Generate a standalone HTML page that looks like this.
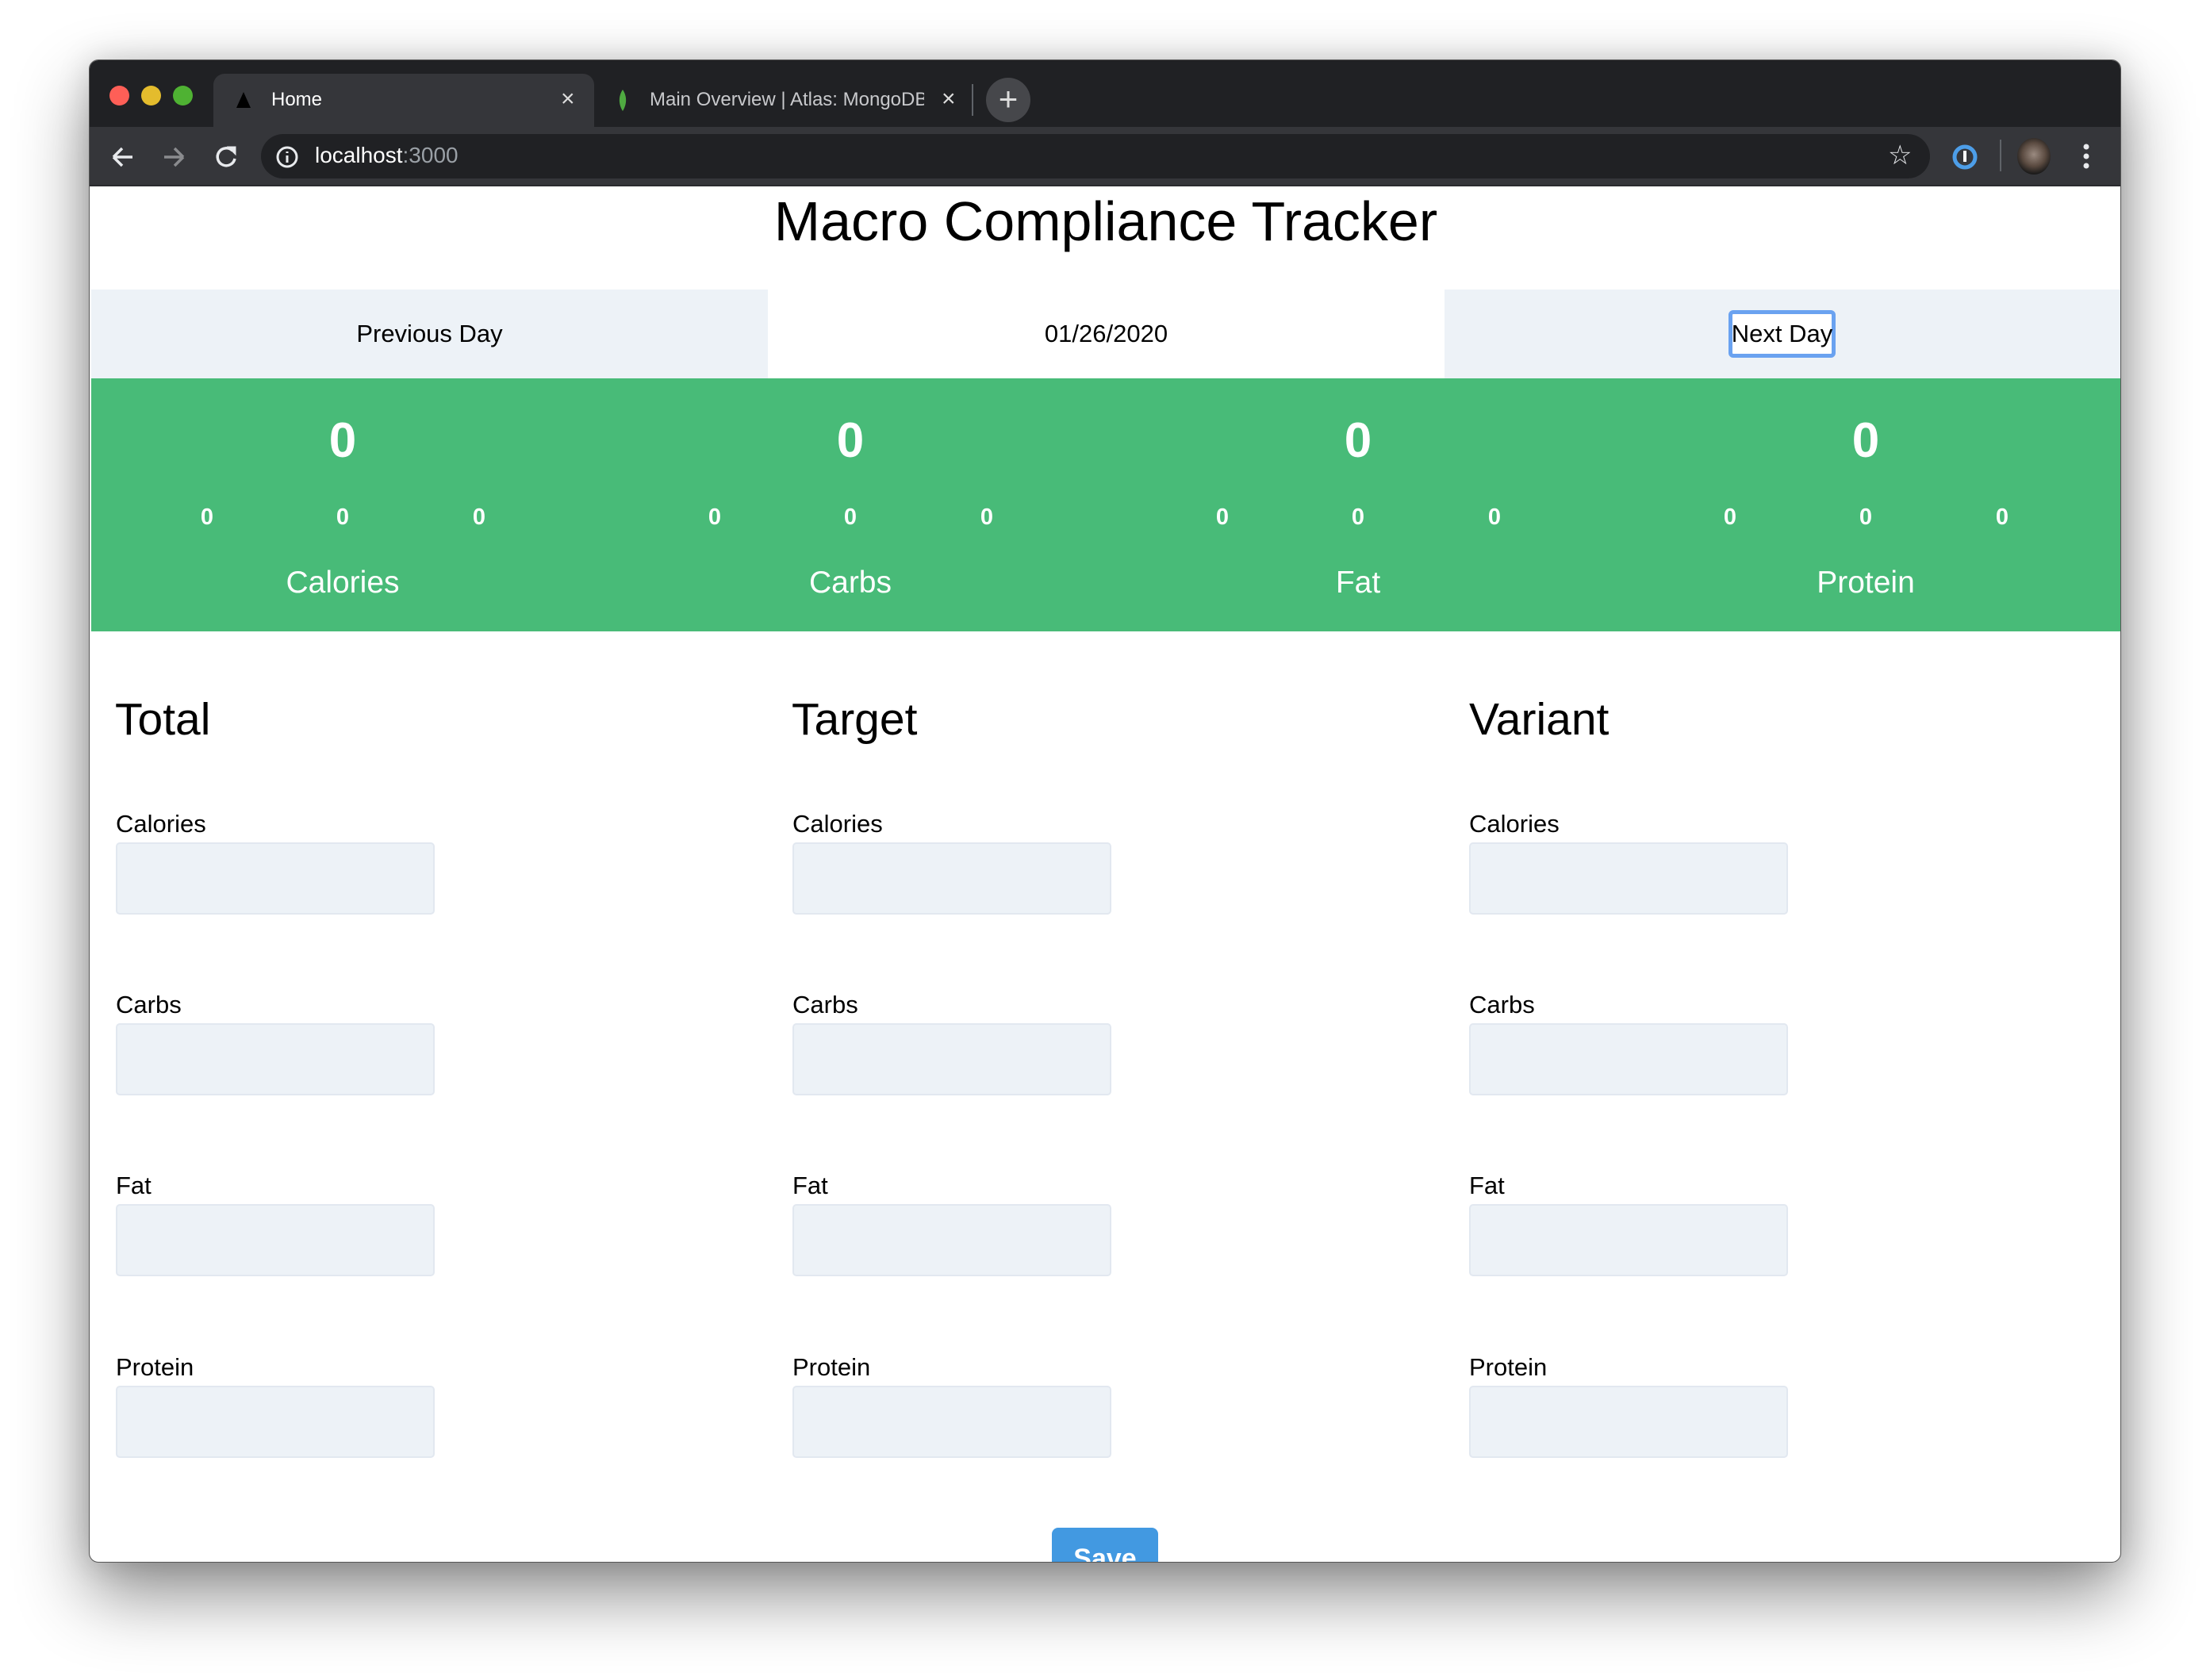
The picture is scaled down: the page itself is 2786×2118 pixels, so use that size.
<!DOCTYPE html>
<html><head><meta charset="utf-8"><style>
*{margin:0;padding:0;box-sizing:border-box}
body{width:2786px;height:2118px;background:#fff;position:relative;overflow:hidden;font-family:"Liberation Sans",Arial,sans-serif}
.a{position:absolute}
.win{left:112px;top:75px;width:2562px;height:1895px;border-radius:12px;overflow:hidden;background:#fff;box-shadow:0 40px 90px rgba(0,0,0,.45),0 0 40px rgba(0,0,0,.15);border:1px solid #555}
.c{text-align:center;white-space:nowrap}
.lbl{font-size:31px;color:#000}
.inp{width:402px;height:91px;background:#edf2f7;border:2px solid #e2e8f0;border-radius:5px}
.h{font-size:57px;color:#000}
.w{color:#fff}
</style></head><body>
<div class="a win">
 <div class="a" style="left:0;top:0;width:2562px;height:84px;background:#202124"></div>
 <div class="a" style="left:25px;top:32px;width:25px;height:25px;border-radius:50%;background:#fe5f57"></div>
 <div class="a" style="left:65px;top:32px;width:25px;height:25px;border-radius:50%;background:#e4bc2d"></div>
 <div class="a" style="left:105px;top:32px;width:25px;height:25px;border-radius:50%;background:#4fb233"></div>
 <div class="a" style="left:156px;top:17px;width:480px;height:80px;background:#35363a;border-radius:14px 14px 0 0"></div>
 <svg class="a" style="left:183px;top:38px" width="22" height="24"><path d="M11 2 L20 22 L2 22Z" fill="#000"/></svg>
 <div class="a w" style="left:229px;top:36px;font-size:24px">Home</div>
 <div class="a w" style="left:594px;top:32px;font-size:30px;color:#ddd">×</div>
 <svg class="a" style="left:664px;top:36px" width="16" height="32"><path d="M8 1C2 10 3 20 8 28C13 20 14 10 8 1Z" fill="#4faa41"/></svg>
 <div class="a" style="left:706px;top:36px;font-size:24px;color:#c8c9cc;width:346px;overflow:hidden;white-space:nowrap">Main Overview | Atlas: MongoDB</div>
 <div class="a" style="left:1074px;top:32px;font-size:30px;color:#ddd">×</div>
 <div class="a" style="left:1112px;top:30px;width:2px;height:40px;background:#5f6368"></div>
 <div class="a" style="left:1130px;top:22px;width:56px;height:56px;border-radius:50%;background:#46474b;color:#ddd;font-size:42px;line-height:54px;text-align:center">+</div>
 <div class="a" style="left:0;top:84px;width:2562px;height:74px;background:#35363a"></div>
 <svg class="a" style="left:24px;top:104px" width="240" height="36" fill="none" stroke-width="3.5">
  <path d="M6 18H30M6 18L17 7M6 18L17 29" stroke="#e8eaed"/>
  <path d="M94 18H70M94 18L83 7M94 18L83 29" stroke="#8a8b8e"/>
  <path d="M156 10A11 11 0 1 0 159 20" stroke="#e8eaed"/><path d="M150 5H160V15Z" fill="#e8eaed" stroke="#e8eaed" stroke-width="1"/>
 </svg>
 <div class="a" style="left:216px;top:93px;width:2104px;height:56px;background:#202124;border-radius:28px"></div>
 <svg class="a" style="left:234px;top:107px" width="30" height="30"><circle cx="15" cy="15" r="12" fill="none" stroke="#e8eaed" stroke-width="3"/><path d="M15 13V22M15 8V10" stroke="#e8eaed" stroke-width="3"/></svg>
 <div class="a" style="left:284px;top:104px;font-size:28px;color:#fff">localhost<span style="color:#9aa0a6">:3000</span></div>
 <div class="a" style="left:2267px;top:100px;font-size:34px;color:#e8eaed">☆</div>
 <svg class="a" style="left:2348px;top:104px" width="34" height="36"><circle cx="16" cy="18" r="13" fill="none" stroke="#4d9ee8" stroke-width="5"/><rect x="14" y="10" width="4" height="14" fill="#fff"/></svg>
 <div class="a" style="left:2408px;top:100px;width:2px;height:40px;background:#5f6368"></div>
 <div class="a" style="left:2430px;top:98px;width:42px;height:46px;border-radius:50%;background:radial-gradient(circle at 50% 45%,#9a8a80 0,#5a4a40 45%,#1a1a1a 75%)"></div>
 <svg class="a" style="left:2512px;top:104px" width="10" height="34" fill="#e8eaed"><circle cx="5" cy="5" r="3.5"/><circle cx="5" cy="17" r="3.5"/><circle cx="5" cy="29" r="3.5"/></svg>
 <div class="a" style="left:0;top:157px;width:2562px;height:2px;background:#2a2b2e"></div>

 <div class="a c" style="left:0;top:145px;width:2562px;font-size:70px;line-height:116px;color:#000">Macro Compliance Tracker</div>
 <div class="a" style="left:2px;top:289px;width:853px;height:112px;background:#edf2f7"></div>
 <div class="a" style="left:1708px;top:289px;width:853px;height:112px;background:#edf2f7"></div>
 <div class="a c" style="left:2px;top:327px;width:853px;font-size:31px">Previous Day</div>
 <div class="a c" style="left:855px;top:327px;width:853px;font-size:31px">01/26/2020</div>
 <div class="a" style="left:2066px;top:315px;width:135px;height:60px;border:5px solid #6aa2f0;border-radius:6px;background:#fff"></div>
 <div class="a c" style="left:2066px;top:327px;width:135px;font-size:31px">Next Day</div>

 <div class="a" style="left:2px;top:401px;width:2560px;height:319px;background:#48bb78"></div>
</div>
<div class="a" style="left:114px;top:476px;width:2560px;height:320px">
 <div class="a c w" style="left:268px;top:44px;width:100px;font-size:62px;font-weight:bold">0</div>
 <div class="a c w" style="left:908px;top:44px;width:100px;font-size:62px;font-weight:bold">0</div>
 <div class="a c w" style="left:1548px;top:44px;width:100px;font-size:62px;font-weight:bold">0</div>
 <div class="a c w" style="left:2188px;top:44px;width:100px;font-size:62px;font-weight:bold">0</div>
 <div class="a w" style="left:0;top:160px;width:2560px;font-size:29px;font-weight:bold">
  <span class="a c" style="left:127px;width:40px">0</span><span class="a c" style="left:298px;width:40px">0</span><span class="a c" style="left:470px;width:40px">0</span>
  <span class="a c" style="left:767px;width:40px">0</span><span class="a c" style="left:938px;width:40px">0</span><span class="a c" style="left:1110px;width:40px">0</span>
  <span class="a c" style="left:1407px;width:40px">0</span><span class="a c" style="left:1578px;width:40px">0</span><span class="a c" style="left:1750px;width:40px">0</span>
  <span class="a c" style="left:2047px;width:40px">0</span><span class="a c" style="left:2218px;width:40px">0</span><span class="a c" style="left:2390px;width:40px">0</span>
 </div>
 <div class="a c w" style="left:118px;top:237px;width:400px;font-size:39px">Calories</div>
 <div class="a c w" style="left:758px;top:237px;width:400px;font-size:39px">Carbs</div>
 <div class="a c w" style="left:1398px;top:237px;width:400px;font-size:39px">Fat</div>
 <div class="a c w" style="left:2038px;top:237px;width:400px;font-size:39px">Protein</div>
</div>

<div class="a h" style="left:145px;top:874px">Total</div>
<div class="a h" style="left:998px;top:874px">Target</div>
<div class="a h" style="left:1852px;top:874px">Variant</div>

<div class="a lbl" style="left:146px;top:1021px">Calories</div><div class="a inp" style="left:146px;top:1062px"></div>
<div class="a lbl" style="left:146px;top:1249px">Carbs</div><div class="a inp" style="left:146px;top:1290px"></div>
<div class="a lbl" style="left:146px;top:1477px">Fat</div><div class="a inp" style="left:146px;top:1518px"></div>
<div class="a lbl" style="left:146px;top:1706px">Protein</div><div class="a inp" style="left:146px;top:1747px"></div>

<div class="a lbl" style="left:999px;top:1021px">Calories</div><div class="a inp" style="left:999px;top:1062px"></div>
<div class="a lbl" style="left:999px;top:1249px">Carbs</div><div class="a inp" style="left:999px;top:1290px"></div>
<div class="a lbl" style="left:999px;top:1477px">Fat</div><div class="a inp" style="left:999px;top:1518px"></div>
<div class="a lbl" style="left:999px;top:1706px">Protein</div><div class="a inp" style="left:999px;top:1747px"></div>

<div class="a lbl" style="left:1852px;top:1021px">Calories</div><div class="a inp" style="left:1852px;top:1062px"></div>
<div class="a lbl" style="left:1852px;top:1249px">Carbs</div><div class="a inp" style="left:1852px;top:1290px"></div>
<div class="a lbl" style="left:1852px;top:1477px">Fat</div><div class="a inp" style="left:1852px;top:1518px"></div>
<div class="a lbl" style="left:1852px;top:1706px">Protein</div><div class="a inp" style="left:1852px;top:1747px"></div>

<div class="a" style="left:1326px;top:1926px;width:134px;height:43px;overflow:hidden;border-radius:8px 8px 0 0">
 <div style="background:#4299e1;height:80px;color:#fff;font-weight:bold;font-size:34px;text-align:center;padding-top:20px">Save</div>
</div>
</body></html>
